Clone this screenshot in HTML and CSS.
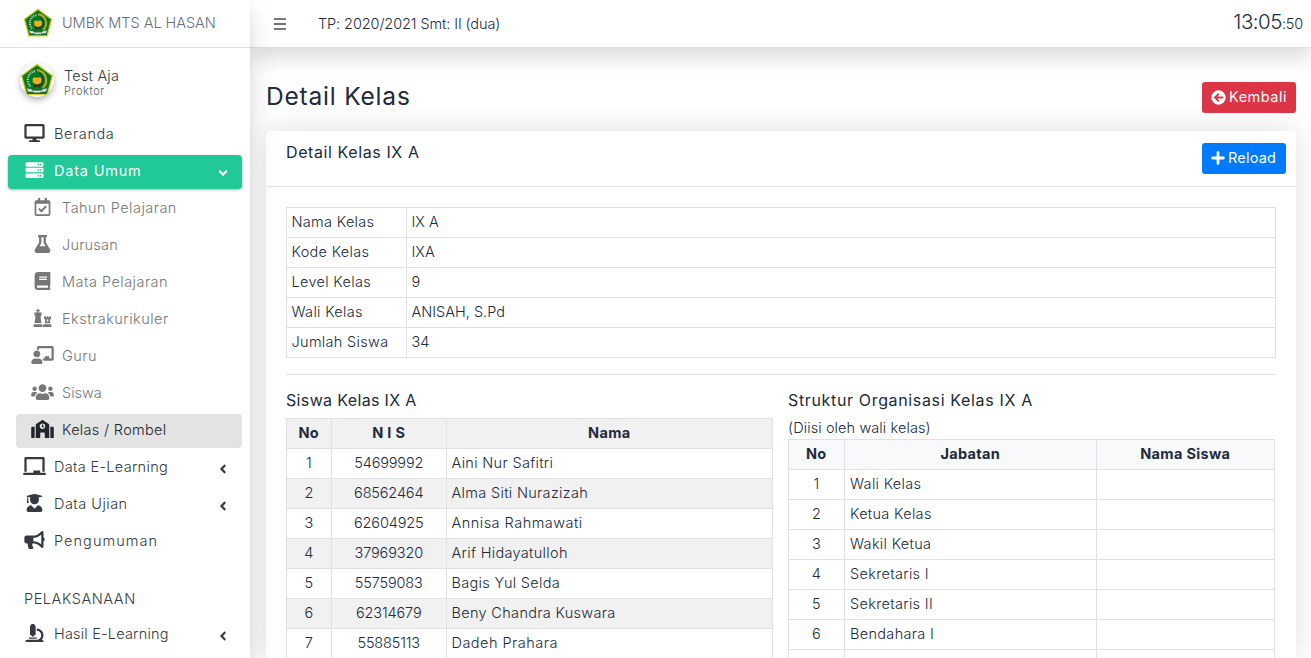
FILE: index.html
```html
<!DOCTYPE html>
<html lang="id">
<head>
<meta charset="utf-8">
<title>UMBK MTS AL HASAN</title>
<link rel="stylesheet" href="styles.css">
</head>
<body>
<svg class="sprite" aria-hidden="true">
<symbol id="desktop" viewBox="0 0 576 512"><path d="M528 0H48C21.500 0 0 21.500 0 48v320c0 26.500 21.500 48 48 48h192l-16 48h-72c-13.300 0-24 10.700-24 24s10.700 24 24 24h272c13.300 0 24-10.700 24-24s-10.700-24-24-24h-72l-16-48h192c26.500 0 48-21.500 48-48V48c0-26.500-21.500-48-48-48zm-16 352H64V64h448v288z"/></symbol>
<symbol id="server" viewBox="0 0 512 512"><path fill-rule="evenodd" d="M32 32h448a32 32 0 0 1 32 32v64a32 32 0 0 1-32 32H32a32 32 0 0 1-32-32V64a32 32 0 0 1 32-32zM432 72a24 24 0 1 0 0 48 24 24 0 0 0 0-48zm-64 0a24 24 0 1 0 0 48 24 24 0 0 0 0-48zM32 192h448a32 32 0 0 1 32 32v64a32 32 0 0 1-32 32H32a32 32 0 0 1-32-32v-64a32 32 0 0 1 32-32zM432 232a24 24 0 1 0 0 48 24 24 0 0 0 0-48zm-64 0a24 24 0 1 0 0 48 24 24 0 0 0 0-48zM32 352h448a32 32 0 0 1 32 32v64a32 32 0 0 1-32 32H32a32 32 0 0 1-32-32v-64a32 32 0 0 1 32-32zM432 392a24 24 0 1 0 0 48 24 24 0 0 0 0-48zm-64 0a24 24 0 1 0 0 48 24 24 0 0 0 0-48z"/></symbol>
<symbol id="calendar" viewBox="0 0 448 512"><path d="M400 64h-48V12c0-6.627-5.373-12-12-12h-40c-6.627 0-12 5.373-12 12v52H160V12c0-6.627-5.373-12-12-12h-40c-6.627 0-12 5.373-12 12v52H48C21.490 64 0 85.490 0 112v352c0 26.510 21.490 48 48 48h352c26.510 0 48-21.490 48-48V112c0-26.510-21.490-48-48-48zm-6 400H54a6 6 0 0 1-6-6V160h352v298a6 6 0 0 1-6 6zm-52.849-200.650L198.842 404.519c-4.705 4.667-12.303 4.637-16.971-.068l-75.091-75.699c-4.667-4.705-4.637-12.303.068-16.971l22.719-22.536c4.705-4.667 12.303-4.637 16.970.069l44.104 44.461 111.072-110.181c4.705-4.667 12.303-4.637 16.971.068l22.536 22.718c4.667 4.705 4.636 12.303-.069 16.970z"/></symbol>
<symbol id="flask" viewBox="0 0 448 512"><path d="M437.200 403.500L320 215V64h8c13.300 0 24-10.700 24-24V24c0-13.300-10.700-24-24-24H120c-13.300 0-24 10.700-24 24v16c0 13.300 10.700 24 24 24h8v151L10.800 403.500C-18.500 450.600 15.300 512 70.900 512h306.200c55.700 0 89.400-61.500 60.100-108.500zM137.900 320l48.200-77.600c3.700-5.200 5.800-11.600 5.800-18.400V64h64v160c0 6.900 2.200 13.200 5.800 18.400l48.200 77.600h-172z"/></symbol>
<symbol id="book" viewBox="0 0 448 512"><path fill-rule="evenodd" d="M448 360V24c0-13.300-10.700-24-24-24H96C43 0 0 43 0 96v320c0 53 43 96 96 96h328c13.300 0 24-10.700 24-24v-16c0-7.500-3.500-14.300-8.900-18.700-4.200-15.400-4.200-59.300 0-74.700 5.400-4.300 8.900-11.100 8.900-18.600zM128 134c0-3.300 2.700-6 6-6h212c3.300 0 6 2.700 6 6v20c0 3.300-2.700 6-6 6H134c-3.300 0-6-2.700-6-6v-20zm0 64c0-3.300 2.700-6 6-6h212c3.300 0 6 2.700 6 6v20c0 3.300-2.700 6-6 6H134c-3.300 0-6-2.700-6-6v-20zm253.400 250H96c-17.700 0-32-14.300-32-32 0-17.600 14.400-32 32-32h285.400c-1.900 17.100-1.900 46.900 0 64z"/></symbol>
<symbol id="chess" viewBox="0 0 512 512"><path fill-rule="evenodd" d="M110 0h36v28h34v34h-34v34h80q16 0 12 16l-20 48h10v30h-24c0 84 8 136 26 210H26c18-74 26-126 26-210H28v-30h10l-20-48q-4-16 12-16h80V62H76V28h34zM16 432h224l16 32v48H0v-48zM300 208h44v28h32v-28h48v28h32v-28h44v72l-34 28c0 36 4 66 18 96H316c14-30 18-60 18-96l-34-28zm80 96v48h40v-48q-20-26-40 0zM288 432h208l16 32v48H272v-48z"/></symbol>
<symbol id="teacher" viewBox="0 0 640 512"><path d="M208 352c-2.390 0-4.780.350-7.060 1.090C187.980 357.300 174.350 360 160 360c-14.350 0-27.980-2.700-40.950-6.910-2.280-.740-4.660-1.090-7.050-1.090C49.940 352-.330 402.480 0 464.620.140 490.880 21.730 512 48 512h224c26.270 0 47.860-21.120 48-47.380.330-62.140-49.940-112.620-112-112.620zm-48-32c53.020 0 96-42.980 96-96s-42.980-96-96-96-96 42.980-96 96 42.980 96 96 96zM592 0H208c-26.470 0-48 22.250-48 49.590V96c23.420 0 45.100 6.780 64 17.800V64h352v288h-64v-64H384v64h-76.240c19.100 16.690 33.120 38.730 39.690 64H592c26.470 0 48-22.250 48-49.590V49.590C640 22.250 618.470 0 592 0z"/></symbol>
<symbol id="users" viewBox="0 0 640 512"><path d="M96 224c35.300 0 64-28.700 64-64s-28.700-64-64-64-64 28.700-64 64 28.700 64 64 64zm448 0c35.300 0 64-28.700 64-64s-28.700-64-64-64-64 28.700-64 64 28.700 64 64 64zm32 32h-64c-17.600 0-33.500 7.100-45.100 18.600 40.300 22.100 68.900 62 75.100 109.400h66c17.700 0 32-14.300 32-32v-32c0-35.300-28.700-64-64-64zm-256 0c61.900 0 112-50.100 112-112S381.900 32 320 32 208 82.100 208 144s50.100 112 112 112zm76.800 32h-8.300c-20.800 10-43.900 16-68.500 16s-47.600-6-68.500-16h-8.300C179.600 288 128 339.600 128 403.200V432c0 26.500 21.500 48 48 48h288c26.500 0 48-21.500 48-48v-28.800c0-63.600-51.600-115.200-115.200-115.200zm-223.700-13.400C161.500 263.100 145.600 256 128 256H64c-35.300 0-64 28.700-64 64v32c0 17.700 14.300 32 32 32h65.900c6.300-47.400 34.900-87.300 75.200-109.400z"/></symbol>
<symbol id="school" viewBox="0 0 640 512"><path d="M0 224v272c0 8.840 7.160 16 16 16h80V192H32c-17.670 0-32 14.330-32 32zm360-48h-24v-40c0-4.420-3.580-8-8-8h-16c-4.420 0-8 3.580-8 8v64c0 4.420 3.580 8 8 8h48c4.420 0 8-3.580 8-8v-16c0-4.420-3.580-8-8-8zm137.750-63.960l-160-106.670a32.020 32.020 0 0 0-35.500 0l-160 106.670A32.002 32.002 0 0 0 128 138.660V512h128V368c0-8.840 7.160-16 16-16h96c8.840 0 16 7.160 16 16v144h128V138.670c0-10.700-5.350-20.700-14.250-26.630zM320 256c-44.180 0-80-35.820-80-80s35.820-80 80-80 80 35.820 80 80-35.820 80-80 80zm288-64h-64v320h80c8.840 0 16-7.160 16-16V224c0-17.670-14.330-32-32-32z"/></symbol>
<symbol id="board" viewBox="0 0 640 512"><path d="M96 64h448v352h64V40c0-22.060-17.940-40-40-40H72C49.940 0 32 17.940 32 40v376h64V64zm528 384H480v-64H288v64H16c-8.840 0-16 7.160-16 16v32c0 8.840 7.160 16 16 16h608c8.840 0 16-7.160 16-16v-32c0-8.840-7.160-16-16-16z"/></symbol>
<symbol id="graduate" viewBox="0 0 448 512"><path d="M319.400 320.600L224 416l-95.400-95.400C57.100 323.700 0 382.200 0 454.400v9.600c0 26.500 21.500 48 48 48h352c26.500 0 48-21.500 48-48v-9.600c0-72.200-57.100-130.700-128.600-133.800zM13.600 79.800l6.400 1.500v58.400c-7 4.200-12 11.500-12 20.300 0 8.400 4.600 15.400 11.100 19.700L3.500 242c-1.700 6.900 2.100 14 7.600 14h41.800c5.500 0 9.300-7.100 7.600-14l-15.600-62.300C51.400 175.400 56 168.400 56 160c0-8.800-5-16.100-12-20.300V87.100l66 15.900c-8.600 17.200-14 36.400-14 57 0 70.700 57.300 128 128 128s128-57.300 128-128c0-20.600-5.300-39.800-14-57l96.300-23.200c18.200-4.400 18.200-27.100 0-31.500l-190.400-46c-13-3.100-26.700-3.100-39.700 0L13.600 48.200c-18.100 4.400-18.100 27.200 0 31.600z"/></symbol>
<symbol id="bullhorn" viewBox="0 0 576 512"><path d="M576 240c0-23.630-12.950-44.040-32-55.120V32.010C544 23.260 537.020 0 512 0c-7.120 0-14.190 2.380-19.980 7.020l-85.030 68.030C364.280 109.190 310.660 128 256 128H64c-35.350 0-64 28.650-64 64v96c0 35.350 28.650 64 64 64h33.700c-1.390 10.480-2.180 21.140-2.180 32 0 39.770 9.260 77.350 25.560 110.940 5.190 10.690 16.520 17.060 28.400 17.060h74.280c26.050 0 41.690-29.840 25.900-50.560-16.400-21.520-26.150-48.360-26.150-77.440 0-11.110 1.620-21.790 4.410-32H256c54.660 0 108.280 18.810 150.980 52.950l85.030 68.030a32.023 32.023 0 0 0 19.980 7.020c24.920 0 32-22.780 32-32V295.130C563.050 284.040 576 263.630 576 240zm-96 141.420l-33.050-26.440C392.950 311.780 325.120 288 256 288v-96c69.120 0 136.950-23.780 190.950-66.980L480 98.580v282.840z"/></symbol>
<symbol id="microscope" viewBox="0 0 512 512"><path d="M160 320h12v16c0 8.840 7.160 16 16 16h40c8.840 0 16-7.160 16-16v-16h12c17.670 0 32-14.330 32-32V64c0-17.670-14.330-32-32-32V16c0-8.840-7.160-16-16-16h-64c-8.840 0-16 7.160-16 16v16c-17.670 0-32 14.330-32 32v224c0 17.670 14.330 32 32 32zm304 128h-1.290C493.240 413.990 512 369.200 512 320c0-105.880-86.120-192-192-192v64c70.580 0 128 57.420 128 128s-57.420 128-128 128H48c-26.510 0-48 21.490-48 48 0 8.840 7.160 16 16 16h480c8.840 0 16-7.160 16-16 0-26.510-21.490-48-48-48zm-360-32h208c4.420 0 8-3.580 8-8v-16c0-4.420-3.580-8-8-8H104c-4.420 0-8 3.580-8 8v16c0 4.420 3.580 8 8 8z"/></symbol>
<symbol id="angle" viewBox="0 0 256 512"><path d="M31.700 239l136-136c9.400-9.400 24.600-9.400 33.900 0l22.600 22.600c9.400 9.400 9.400 24.600 0 33.900L127.900 256l96.400 96.400c9.400 9.400 9.400 24.600 0 33.900L201.700 409c-9.400 9.400-24.600 9.400-33.900 0l-136-136c-9.500-9.400-9.500-24.600-.100-34z"/></symbol>
<symbol id="emblem" viewBox="0 0 36 36">
<path d="M18 1.500 34.300 13.500 29 33.500H7L1.700 13.500Z" fill="#087a22" stroke="#d9cc2b" stroke-width="1.500"/>
<path d="M16 8.500C8 10 6 19 11 25" fill="none" stroke="#b9d0b6" stroke-width="2.400" stroke-dasharray="1.300 1.100"/>
<path d="M18 7.500C29 9 30 21 24 26.500" fill="none" stroke="#c0a62e" stroke-width="2.200"/>
<path d="M20 11c5 3 6 9 2 13" fill="none" stroke="#173f19" stroke-width="1.200"/>
<path d="M13.500 16q2.500-2 4.500 0 2-2 4.500 0v4.500l-2.500 2h-4l-2.500-2Z" fill="#f0ae1d"/>
<path d="m14.500 25.500 7-3m0 3-7-3" stroke="#3a3118" stroke-width="1.600"/>
<path d="M7 26q2 2 5 1.500l1.500 1.500h9l1.500-1.500q3 .5 5-1.500l-1 4q-3 1-5 .5l-2 1h-6l-2-1q-3 .5-5-.5Z" fill="#e0e5e2" stroke="#59665e" stroke-width=".6"/>
</symbol>
</svg>
<div class="app">
<aside class="sidebar">
<div class="brand"><svg class="brand-logo"><use href="#emblem"/></svg><span>UMBK MTS AL HASAN</span></div>
<div class="user"><span class="avatar"><svg><use href="#emblem"/></svg></span><div><div class="user-name">Test Aja</div><div class="user-role">Proktor</div></div></div>
<nav class="nav">
<a class="item"><span class="icon"><svg><use href="#desktop"/></svg></span><span class="ls-wide">Beranda</span></a>
<a class="item active"><span class="icon"><svg><use href="#server"/></svg></span><span class="ls-wider">Data Umum</span><svg class="angle down"><use href="#angle"/></svg></a>
<a class="item sub"><span class="icon"><svg><use href="#calendar"/></svg></span><span class="ls-mid">Tahun Pelajaran</span></a>
<a class="item sub"><span class="icon"><svg><use href="#flask"/></svg></span><span class="ls-tight">Jurusan</span></a>
<a class="item sub"><span class="icon"><svg><use href="#book"/></svg></span><span class="ls-mid">Mata Pelajaran</span></a>
<a class="item sub"><span class="icon"><svg><use href="#chess"/></svg></span><span class="ls-mid">Ekstrakurikuler</span></a>
<a class="item sub"><span class="icon"><svg><use href="#teacher"/></svg></span><span class="ls-mid">Guru</span></a>
<a class="item sub"><span class="icon"><svg><use href="#users"/></svg></span><span class="ls-none">Siswa</span></a>
<a class="item sub selected"><span class="icon"><svg><use href="#school"/></svg></span><span>Kelas / Rombel</span></a>
<a class="item"><span class="icon"><svg><use href="#board"/></svg></span><span>Data E-Learning</span><svg class="angle"><use href="#angle"/></svg></a>
<a class="item"><span class="icon"><svg><use href="#graduate"/></svg></span><span class="ls-mid">Data Ujian</span><svg class="angle"><use href="#angle"/></svg></a>
<a class="item"><span class="icon"><svg><use href="#bullhorn"/></svg></span><span class="ls-widest">Pengumuman</span></a>
<div class="nav-header">PELAKSANAAN</div>
<a class="item"><span class="icon"><svg><use href="#microscope"/></svg></span><span class="ls-tight">Hasil E-Learning</span><svg class="angle"><use href="#angle"/></svg></a>
</nav>
</aside>
<div class="main">
<header class="topbar"><span class="burger"><i></i><i></i><i></i></span><span class="term">TP: 2020/2021 Smt: II (dua)</span><span class="clock">13:05<small>:50</small></span></header>
<main class="content">
<div class="page-head"><h1>Detail Kelas</h1><button class="btn danger"><svg viewBox="0 0 16 16"><circle cx="8" cy="8" r="7.700" fill="currentColor"/><path d="M13 8H4.500M8.300 3.900 4.200 8l4.100 4.100" fill="none" stroke="#dc3545" stroke-width="1.900"/></svg><span>Kembali</span></button></div>
<section class="card">
<div class="card-head"><h2>Detail Kelas IX A</h2><button class="btn primary"><svg viewBox="0 0 14 14"><path d="M7 1.600v10.800M1.600 7h10.800" stroke="currentColor" stroke-width="2.800" stroke-linecap="round"/></svg><span>Reload</span></button></div>
<div class="card-body">
<table class="info"><colgroup><col class="c-label"><col></colgroup>
<tr><td>Nama Kelas</td><td>IX A</td></tr>
<tr><td>Kode Kelas</td><td>IXA</td></tr>
<tr><td>Level Kelas</td><td>9</td></tr>
<tr><td>Wali Kelas</td><td>ANISAH, S.Pd</td></tr>
<tr><td>Jumlah Siswa</td><td>34</td></tr>
</table>
<hr>
<div class="columns">
<div><h3>Siswa Kelas IX A</h3>
<table class="students"><colgroup><col class="c-no"><col class="c-nis"><col></colgroup>
<tr><th>No</th><th>N I S</th><th>Nama</th></tr>
<tr><td>1</td><td>54699992</td><td>Aini Nur Safitri</td></tr>
<tr><td>2</td><td>68562464</td><td>Alma Siti Nurazizah</td></tr>
<tr><td>3</td><td>62604925</td><td class="ls-mid">Annisa Rahmawati</td></tr>
<tr><td>4</td><td>37969320</td><td>Arif Hidayatulloh</td></tr>
<tr><td>5</td><td>55759083</td><td>Bagis Yul Selda</td></tr>
<tr><td>6</td><td>62314679</td><td>Beny Chandra Kuswara</td></tr>
<tr><td>7</td><td>55885113</td><td class="ls-mid">Dadeh Prahara</td></tr>
</table></div>
<div><h3 class="structure-title">Struktur Organisasi Kelas IX A</h3><p>(Diisi oleh wali kelas)</p>
<table class="structure"><colgroup><col class="c-num"><col class="c-role"><col></colgroup>
<tr><th>No</th><th>Jabatan</th><th>Nama Siswa</th></tr>
<tr><td>1</td><td>Wali Kelas</td><td></td></tr>
<tr><td>2</td><td>Ketua Kelas</td><td></td></tr>
<tr><td>3</td><td>Wakil Ketua</td><td></td></tr>
<tr><td>4</td><td>Sekretaris I</td><td></td></tr>
<tr><td>5</td><td>Sekretaris II</td><td></td></tr>
<tr><td>6</td><td>Bendahara I</td><td></td></tr>
<tr><td></td><td></td><td></td></tr>
</table></div>
</div>
</div>
</section>
</main>
</div>
</div>
</body>
</html>
```
FILE: styles.css
```css
* { box-sizing: border-box; }
body { margin: 0; height: 658px; overflow: hidden; background: #fff; color: #212b3a; font: 290 14.5px/20px Inter, "Open Sans", sans-serif; letter-spacing: .32px; }
.sprite { display: none; }
.app { display: flex; height: 658px; overflow: hidden; }
h1, h2, h3, p { margin: 0; font-weight: 380; }

.sidebar { width: 250px; flex: none; background: #fff; color: #343a40; box-shadow: 0 14px 28px rgba(0,0,0,.13), 0 10px 10px rgba(0,0,0,.05); z-index: 1; }
.brand { height: 48px; display: flex; align-items: center; padding: 0 0 2px 22px; border-bottom: 1px solid #dee2e6; color: #66707a; white-space: nowrap; letter-spacing: -.05px; }
.brand-logo { width: 32px; height: 30px; margin-right: 8px; }
.user { display: flex; height: 70px; padding: 15px 0 0 20px; }
.avatar { width: 34px; height: 34px; margin: 0 10px 0 0; border-radius: 50%; box-shadow: 0 3px 6px rgba(0,0,0,.3); }
.avatar svg { display: block; width: 34px; height: 34px; border-radius: 50%; }
.user-name { line-height: 26px; letter-spacing: .2px; }
.user-role { font-size: 11px; line-height: 12px; margin-top: -4px; color: #555c63; letter-spacing: .6px; }
.nav { display: flex; flex-direction: column; gap: 3px; padding: 0 8px; }
.item { display: flex; align-items: center; height: 34px; padding: 0 13px 3px 14px; border-radius: 4px; white-space: nowrap; }
.icon { width: 25px; margin-right: 7px; display: flex; justify-content: center; }
.icon svg { height: 18px; width: 23px; margin-bottom: 2px; fill: currentColor; }
.sub { margin-left: 8px; color: #777; }
.active { background: #20c997; color: #fff; box-shadow: 0 1px 3px rgba(0,0,0,.3); font-weight: 400; }
.selected { background: #e3e3e3; color: #212529; }
.ls-none { letter-spacing: 0; }
.ls-tight { letter-spacing: .2px; }
.ls-mid { letter-spacing: .48px; }
.ls-wide { letter-spacing: .6px; }
.ls-wider { letter-spacing: .8px; }
.ls-widest { letter-spacing: 1.05px; }
.angle { width: 8px; height: 14px; margin: 5px 2px 0 auto; fill: currentColor; }
.down { transform: rotate(-90deg); }
.nav-header { height: 53px; padding: 27px 16px 0; letter-spacing: .55px; }

.main { flex: 1; min-width: 0; }
.topbar { height: 48px; display: flex; align-items: center; padding: 0 8px 1px 24px; border-bottom: 1px solid #dee2e6; background: #fff; box-shadow: 0 10px 20px rgba(0,0,0,.14); }
.burger { width: 12px; display: grid; gap: 3px; margin-top: 1px; }
.burger i { height: 2px; background: #777; }
.term { margin: 1px 0 0 32px; letter-spacing: -.1px; }
.clock { margin-left: auto; font-size: 20.5px; letter-spacing: -.5px; }
.clock small { font-size: 14.5px; letter-spacing: -.2px; }
.content { padding: 34px 15px 0 16px; }
.page-head { height: 49px; display: flex; justify-content: space-between; align-items: flex-start; }
h1 { font-size: 24.5px; line-height: 28px; letter-spacing: .8px; }
.btn { display: flex; align-items: center; gap: 3px; height: 31px; padding: 0 9px 1px; border: 0; border-radius: 3px; color: #fff; font: 400 14.5px/20px Inter, sans-serif; }
.btn svg { width: 15px; height: 15px; flex: none; }
.danger { background: #dc3545; letter-spacing: .5px; }
.primary { width: 84px; background: #007bff; letter-spacing: .2px; }
.btn.primary svg { width: 14px; height: 14px; }
.card { height: 527px; background: #fff; box-shadow: 0 0 30px rgba(0,0,0,.13); border-radius: 4px 4px 0 0; }
.card-head { height: 56px; display: flex; justify-content: space-between; padding: 12px 10px 0 20px; border-bottom: 1px solid #dee2e6; }
h2, h3 { font-size: 16px; line-height: 20px; letter-spacing: .35px; }
h2 { line-height: 18px; letter-spacing: .6px; }
.structure-title { letter-spacing: .65px; }
.card-body { padding: 20px 20px 0; height: 471px; overflow: hidden; }
table { width: 100%; border-collapse: collapse; table-layout: fixed; }
td, th { height: 30px; padding: 0 5px 1px 4.5px; border: 1px solid #dee2e6; }
th { font-weight: 650; }
.c-label { width: 120px; }
.c-no { width: 45px; }
.c-nis { width: 115px; }
.c-num { width: 56px; }
.c-role { width: 252px; }
hr { height: 1px; margin: 16px 0 15px; border: 0; background: #e1e3e5; }
.info td:last-child { letter-spacing: 0; }
.columns { display: grid; grid-template-columns: 487px 487px; gap: 15px; }
.students { margin-top: 8px; }
.students tr:nth-child(odd) { background: #f1f1f1; }
.students td:not(:last-child), .structure td:first-child { text-align: center; letter-spacing: -.15px; }
.structure th { background: #f8f9fa; }
.structure td:nth-child(2) { padding-left: 5px; }
.columns p { margin: 8px 0 1px; font-weight: 290; letter-spacing: .1px; }
```
